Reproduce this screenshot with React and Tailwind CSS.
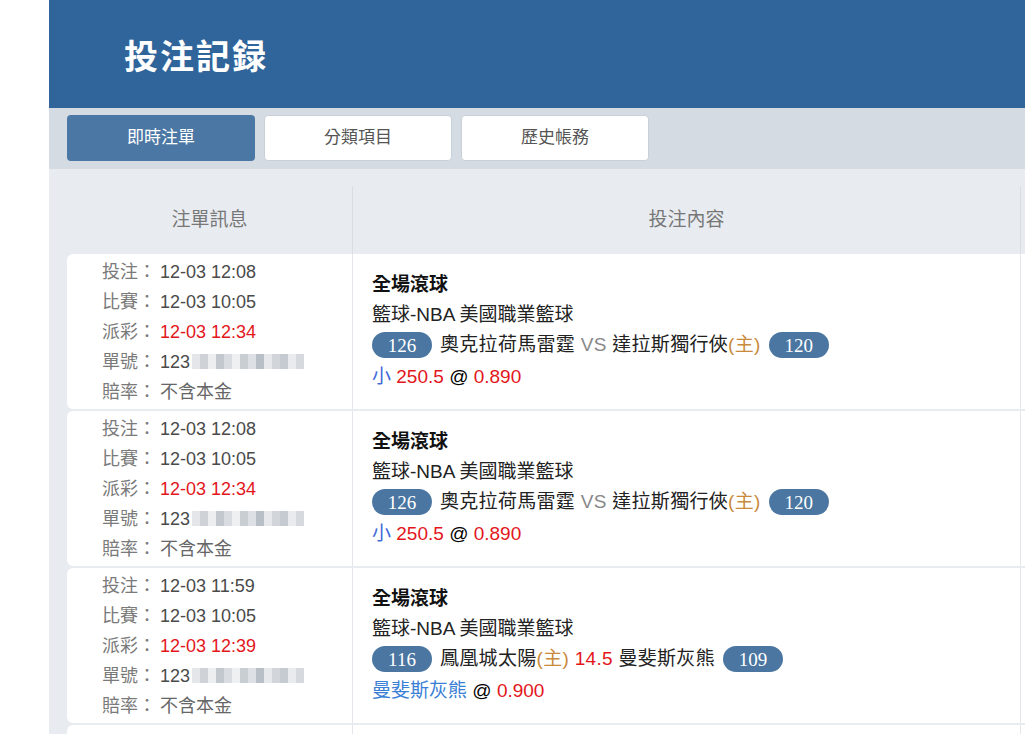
import React from "react";

const rows = [
  {
    bet: "12-03 12:08",
    match: "12-03 10:05",
    payout: "12-03 12:34",
    kind: "ou",
    home: { score: 126, name: "奧克拉荷馬雷霆" },
    away: { score: 120, name: "達拉斯獨行俠" },
    pick: "小",
    line: "250.5",
    odds: "0.890",
  },
  {
    bet: "12-03 12:08",
    match: "12-03 10:05",
    payout: "12-03 12:34",
    kind: "ou",
    home: { score: 126, name: "奧克拉荷馬雷霆" },
    away: { score: 120, name: "達拉斯獨行俠" },
    pick: "小",
    line: "250.5",
    odds: "0.890",
  },
  {
    bet: "12-03 11:59",
    match: "12-03 10:05",
    payout: "12-03 12:39",
    kind: "hdp",
    home: { score: 116, name: "鳳凰城太陽" },
    away: { score: 109, name: "曼斐斯灰熊" },
    pick: "曼斐斯灰熊",
    line: "14.5",
    odds: "0.900",
  },
];

const blurShades = [
  "bg-[#e4e6e9]", "bg-[#cfd3d8]", "bg-[#eceef0]", "bg-[#c3c8ce]", "bg-[#d9dde1]",
  "bg-[#eef0f2]", "bg-[#c9ced3]", "bg-[#dde0e4]", "bg-[#b9bfc6]", "bg-[#e6e8eb]",
  "bg-[#d2d6db]", "bg-[#c6cbd1]", "bg-[#e9ebee]", "bg-[#d6dade]",
];

const Badge = ({ children }) => (
  <span className="inline-flex items-center justify-center w-[60px] h-[26px] rounded-full bg-[#4a76a1] text-white text-[19px] leading-none font-['Liberation_Serif',serif]">
    {children}
  </span>
);

const InfoLine = ({ label, children }) => (
  <div className="flex">
    <span className="w-[58px] text-[#7a7a7a]">{label}</span>
    {children}
  </div>
);

const OrderRow = ({ row }) => (
  <div className="flex h-[155px] bg-white rounded-l-[6px]">
    {/* 注單訊息 */}
    <div className="w-[285px] shrink-0 flex flex-col justify-center pl-[35px] text-[18px] leading-[30px]">
      <InfoLine label="投注：">
        <span className="text-[#4a4a4a]">{row.bet}</span>
      </InfoLine>
      <InfoLine label="比賽：">
        <span className="text-[#4a4a4a]">{row.match}</span>
      </InfoLine>
      <InfoLine label="派彩：">
        <span className="text-[#e3161c]">{row.payout}</span>
      </InfoLine>
      <InfoLine label="單號：">
        <span className="text-[#4a4a4a]">123</span>
        <span className="flex items-center ml-[2px] blur-[0.6px]">
          {blurShades.map((c, i) => (
            <span key={i} className={`w-[8px] h-[15px] ${c}`}></span>
          ))}
        </span>
      </InfoLine>
      <InfoLine label="賠率：">
        <span className="text-[#666]">不含本金</span>
      </InfoLine>
    </div>

    {/* 投注內容 */}
    <div className="w-[668px] shrink-0 border-l border-[#e3e6ea] flex flex-col justify-center pl-[19px] pb-[1px] text-[19px] leading-[30px] text-[#222]">
      <div className="font-bold text-[#111]">全場滾球</div>
      <div>籃球-NBA 美國職業籃球</div>
      <div className="flex items-center h-[31px]">
        <Badge>{row.home.score}</Badge>
        {row.kind === "ou" ? (
          <span className="ml-[8px] mr-[8px] tracking-[0.3px]">
            {row.home.name} <span className="text-[#888]">VS</span> {row.away.name}
            <span className="text-[#c98a3c]">(主)</span>
          </span>
        ) : (
          <span className="ml-[8px] mr-[8px] tracking-[0.3px]">
            {row.home.name}
            <span className="text-[#c98a3c]">(主)</span>{" "}
            <span className="text-[#e3161c]">{row.line}</span> {row.away.name}
          </span>
        )}
        <Badge>{row.away.score}</Badge>
      </div>
      {row.kind === "ou" ? (
        <div className="leading-[32px]">
          <span className="text-[#4169d8]">{row.pick}</span>{" "}
          <span className="text-[#e3161c]">{row.line}</span>{" "}
          <span className="text-black">@</span>{" "}
          <span className="text-[#e3161c]">{row.odds}</span>
        </div>
      ) : (
        <div className="leading-[32px]">
          <span className="text-[#3a7fd5]">{row.pick}</span>{" "}
          <span className="text-black">@</span>{" "}
          <span className="text-[#e3161c]">{row.odds}</span>
        </div>
      )}
    </div>

    <div className="w-[200px] shrink-0 border-l border-[#e3e6ea]"></div>
  </div>
);

// next order, only its top edge is on screen
const EmptyRow = () => (
  <div className="flex h-[155px] bg-white rounded-l-[6px]">
    <div className="w-[285px] shrink-0"></div>
    <div className="w-[668px] shrink-0 border-l border-[#e3e6ea]"></div>
    <div className="w-[200px] shrink-0 border-l border-[#e3e6ea]"></div>
  </div>
);

export default function App() {
  return (
    <div className="w-[1025px] h-[734px] overflow-hidden bg-white flex font-['Liberation_Sans','Noto_Sans_CJK_TC',sans-serif]">
      <div className="w-[49px] shrink-0"></div>
      <div className="flex-1 flex flex-col bg-[#e8ecf1] min-w-0">
        {/* Header */}
        <div className="h-[108px] shrink-0 bg-[#30659b] flex items-center pl-[75px]">
          <h1 className="text-white text-[34px] font-bold tracking-[2px] font-['Noto_Sans_CJK_TC',serif]">
            投注記録
          </h1>
        </div>

        {/* Tabs */}
        <div className="h-[61px] shrink-0 bg-[#d4dbe3] flex items-start pt-[7px] pl-[18px] gap-[9px]">
          <button className="w-[188px] h-[46px] rounded-[4px] bg-[#4a77a4] text-white text-[17px]">
            即時注單
          </button>
          <button className="w-[188px] h-[46px] rounded-[4px] bg-white border border-[#c8d0d9] text-[#555] text-[17px]">
            分類項目
          </button>
          <button className="w-[188px] h-[46px] rounded-[4px] bg-white border border-[#c8d0d9] text-[#555] text-[17px]">
            歷史帳務
          </button>
        </div>

        {/* Table */}
        <div className="pt-[17px] pl-[18px]">
          <div className="flex h-[68px] text-[19px] text-[#777]">
            <div className="w-[285px] shrink-0 flex items-center justify-center">注單訊息</div>
            <div className="w-[668px] shrink-0 border-l border-[#dadee3] flex items-center justify-center">
              投注內容
            </div>
            <div className="w-[200px] shrink-0 border-l border-[#dadee3]"></div>
          </div>
          <div className="flex flex-col gap-[2px]">
            {rows.map((row, i) => (
              <OrderRow key={i} row={row} />
            ))}
            <EmptyRow />
          </div>
        </div>
      </div>
    </div>
  );
}
